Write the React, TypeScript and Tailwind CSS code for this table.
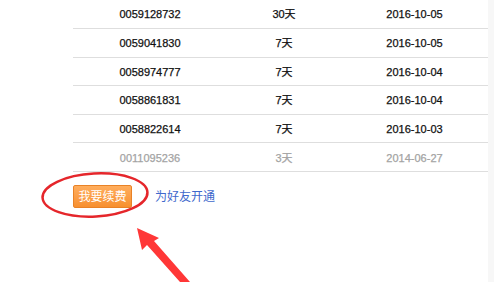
const records = [
  { id: "0059128732", days: "30天", date: "2016-10-05", expired: false },
  { id: "0059041830", days: "7天", date: "2016-10-05", expired: false },
  { id: "0058974777", days: "7天", date: "2016-10-04", expired: false },
  { id: "0058861831", days: "7天", date: "2016-10-04", expired: false },
  { id: "0058822614", days: "7天", date: "2016-10-03", expired: false },
  { id: "0011095236", days: "3天", date: "2014-06-27", expired: true },
];

const font = { fontFamily: '"Liberation Sans", Arial, "Noto Sans CJK SC", sans-serif' };

export default function App() {
  return (
    <div
      className="relative w-[494px] h-[282px] overflow-hidden bg-white flex"
      style={font}
    >
      <div className="flex-1 pl-[73px]">
        <table className="w-[415px] border-collapse text-[11px] [-webkit-text-stroke:0.25px]">
          <tbody>
            {records.map((r) => (
              <tr
                key={r.id}
                className={`h-[28.6px] border-b border-[#dedede] ${
                  r.expired ? "text-[#a3a3a3]" : "text-[#111]"
                }`}
              >
                <td className="w-[154px] text-center p-0 pt-px">{r.id}</td>
                <td className="w-[114px] text-center p-0 pt-px">{r.days}</td>
                <td className="text-center p-0 pt-px">{r.date}</td>
              </tr>
            ))}
          </tbody>
        </table>

        <div className="flex items-center gap-[23px] mt-[13px]">
          <button className="w-[59px] h-[23px] rounded-[2px] border border-[#e98226] bg-gradient-to-b from-[#ffad5c] to-[#f7902f] text-white text-[12px] leading-none">
            我要续费
          </button>
          <a className="text-[12px] text-[#4068cc]">为好友开通</a>
        </div>
      </div>

      {/* faint page edge on the right */}
      <div className="w-[6px] bg-[#f7f7f7]" />

      {/* hand-drawn markup: circle round the button and an arrow pointing at it */}
      <svg
        className="absolute inset-0 pointer-events-none"
        width="494"
        height="282"
        viewBox="0 0 494 282"
      >
        <ellipse
          cx="95"
          cy="195"
          rx="52.5"
          ry="21.5"
          fill="none"
          stroke="#e5262b"
          strokeWidth="2.5"
          transform="rotate(-3 95 195)"
        />
        <path
          d="M137 228 L159 238 L154 241 L190 282 L180 282 L147 245 L142 250 Z"
          fill="#ff3737"
        />
      </svg>
    </div>
  );
}
